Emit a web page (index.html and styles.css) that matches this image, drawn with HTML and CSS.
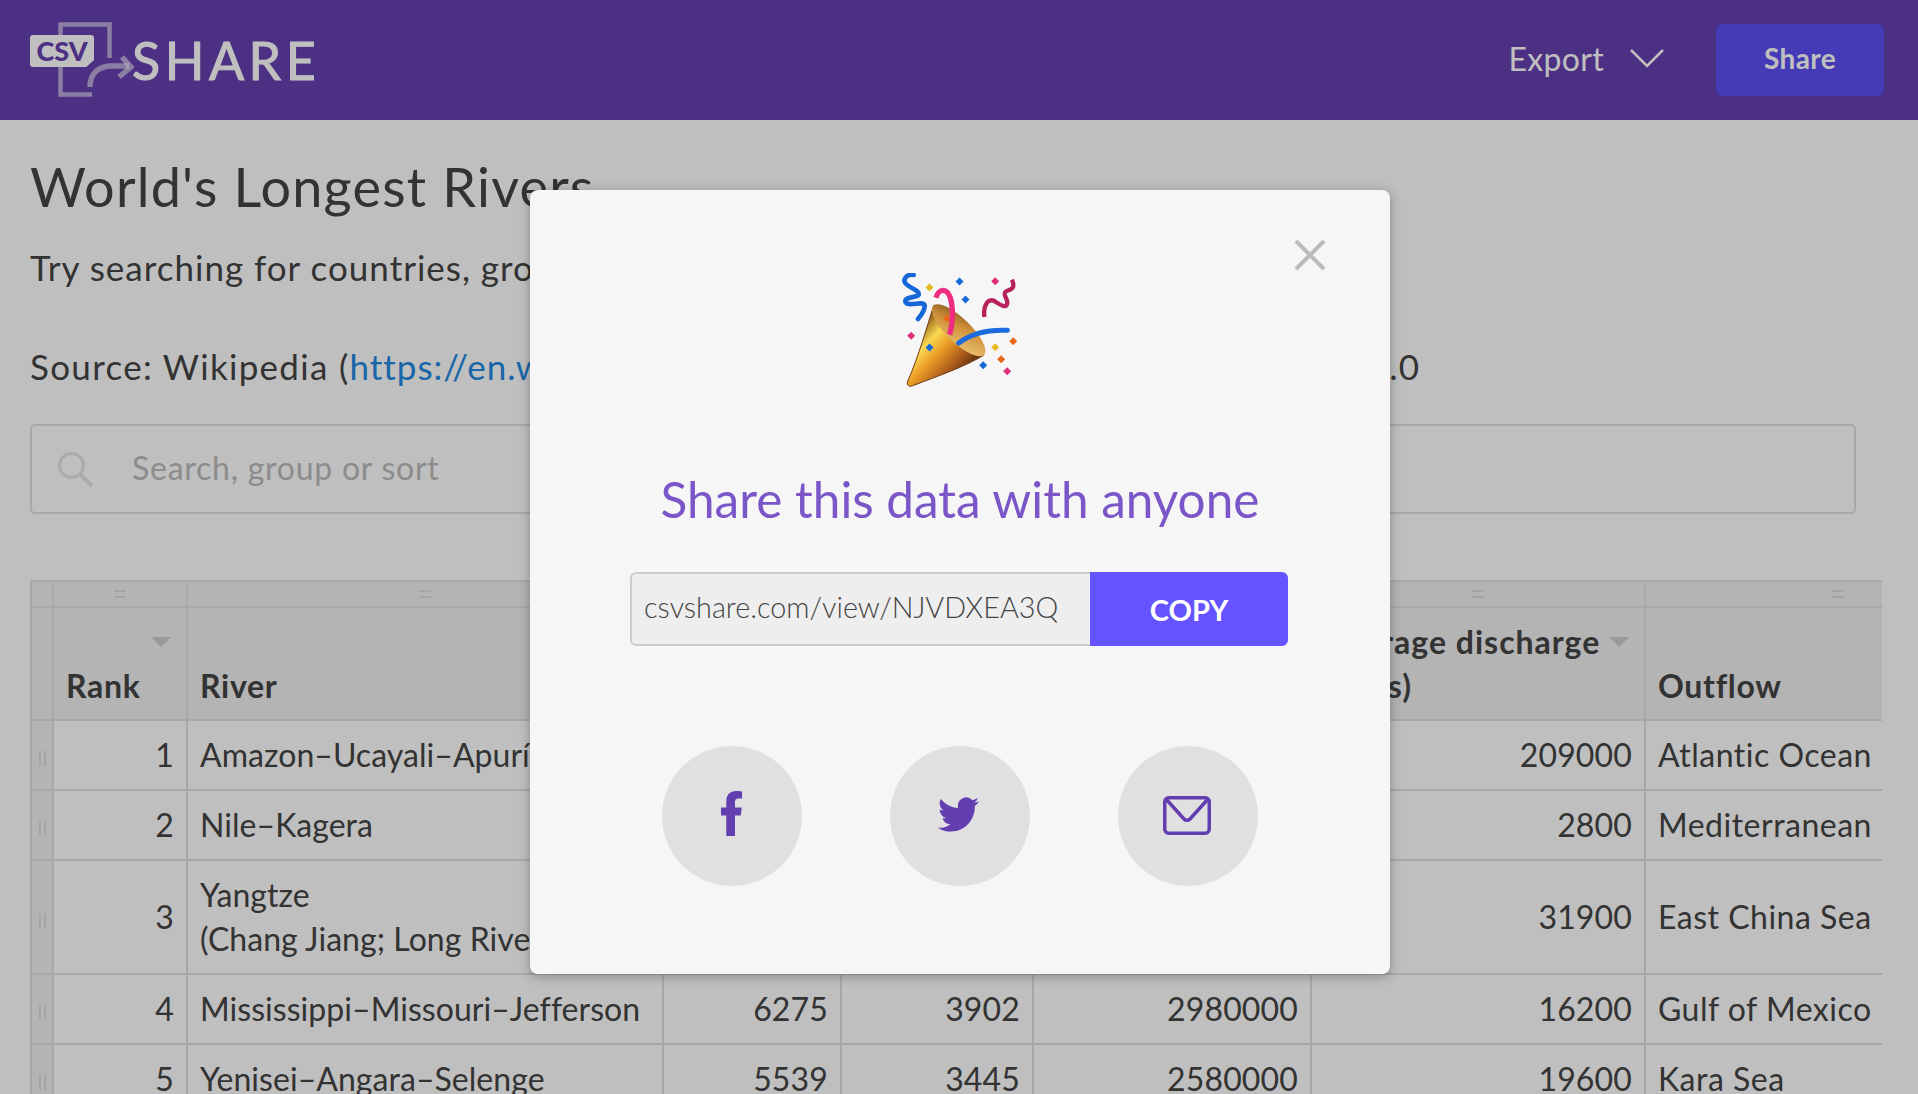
FILE: index.html
```html
<!DOCTYPE html>
<html lang="en">

<head>
  <meta charset="UTF-8">
  <meta name="viewport" content="width=device-width, initial-scale=1.0">
  <title>World's Longest Rivers - CSV Share</title>
  <link rel="stylesheet" href="styles.css">
</head>

<body>
  <header class="topbar">
    <a href="#" class="logo">
      <span class="logo-mark">
        <svg class="logo-art" width="104" height="78" viewBox="0 0 104 78">
          <path d="M30.500 47V3.500H79.500V37M62 73.500H30.500V47" fill="none" stroke="#fff" stroke-opacity="0.55" stroke-width="4.500" />
          <path d="M60 66C60 52 69 45 82 45H99" fill="none" stroke="#fff" stroke-opacity="0.55" stroke-width="5.500" />
          <path d="M92 36L101 46L89 56" fill="none" stroke="#fff" stroke-opacity="0.55" stroke-width="5.500" />
        </svg>
        <span class="logo-csv">CSV</span>
      </span>
      <span class="logo-text">SHARE</span>
    </a>
    <div class="topbar-actions">
      <a href="#" class="export">
        Export
        <svg width="34" height="20" viewBox="0 0 34 20">
          <path d="M1 2L17 18L33 2" fill="none" stroke="#fff" stroke-width="2.500" />
        </svg>
      </a>
      <button class="share-button">Share</button>
    </div>
  </header>

  <main class="content">
    <h1>World's Longest Rivers</h1>
    <p class="intro">Try searching for countries, group by continent, or sort by length</p>
    <p class="source">Source: Wikipedia (<a href="#">https://en.wikipedia.org/wiki/List_of_rivers_by_length</a>), CC BY 3.0</p>

    <div class="search">
      <svg width="36" height="36" viewBox="0 0 36 36">
        <circle cx="13.500" cy="13.500" r="12" fill="none" stroke="#e4e4e4" stroke-width="3" />
        <path d="M22 22L34 34" fill="none" stroke="#e4e4e4" stroke-width="4" />
      </svg>
      <span>Search, group or sort</span>
    </div>

    <div class="table-wrap">
      <table class="rivers">
        <colgroup>
          <col class="col-handle">
          <col class="col-rank">
          <col class="col-river">
          <col class="col-km">
          <col class="col-miles">
          <col class="col-area">
          <col class="col-discharge">
          <col class="col-outflow">
        </colgroup>
        <thead>
          <tr class="column-handles">
            <th></th>
            <th><span class="grip-h"></span></th>
            <th><span class="grip-h"></span></th>
            <th><span class="grip-h"></span></th>
            <th><span class="grip-h"></span></th>
            <th><span class="grip-h"></span></th>
            <th><span class="grip-h"></span></th>
            <th><span class="grip-h"></span></th>
          </tr>
          <tr class="column-names">
            <th class="row-handle"></th>
            <th class="sorted">Rank</th>
            <th>River</th>
            <th class="sorted">Length (km)</th>
            <th class="sorted">Length (miles)</th>
            <th class="sorted">Drainage area (km²)</th>
            <th class="sorted">Average discharge (m³/s)</th>
            <th>Outflow</th>
          </tr>
        </thead>
        <tbody>
          <tr>
            <td class="row-handle"><span class="grip-v"></span></td>
            <td class="num">1</td>
            <td class="river">Amazon–Ucayali–Apurímac</td>
            <td class="num">6992</td>
            <td class="num">4345</td>
            <td class="num">7050000</td>
            <td class="num">209000</td>
            <td class="outflow">Atlantic Ocean</td>
          </tr>
          <tr>
            <td class="row-handle"><span class="grip-v"></span></td>
            <td class="num">2</td>
            <td class="river">Nile–Kagera</td>
            <td class="num">6853</td>
            <td class="num">4258</td>
            <td class="num">3254555</td>
            <td class="num">2800</td>
            <td class="outflow">Mediterranean</td>
          </tr>
          <tr>
            <td class="row-handle"><span class="grip-v"></span></td>
            <td class="num">3</td>
            <td class="river">Yangtze<br>(Chang Jiang; Long River)</td>
            <td class="num">6300</td>
            <td class="num">3917</td>
            <td class="num">1800000</td>
            <td class="num">31900</td>
            <td class="outflow">East China Sea</td>
          </tr>
          <tr>
            <td class="row-handle"><span class="grip-v"></span></td>
            <td class="num">4</td>
            <td class="river">Mississippi–Missouri–Jefferson</td>
            <td class="num">6275</td>
            <td class="num">3902</td>
            <td class="num">2980000</td>
            <td class="num">16200</td>
            <td class="outflow">Gulf of Mexico</td>
          </tr>
          <tr>
            <td class="row-handle"><span class="grip-v"></span></td>
            <td class="num">5</td>
            <td class="river">Yenisei–Angara–Selenge</td>
            <td class="num">5539</td>
            <td class="num">3445</td>
            <td class="num">2580000</td>
            <td class="num">19600</td>
            <td class="outflow">Kara Sea</td>
          </tr>
        </tbody>
      </table>
    </div>
  </main>

  <div class="overlay">
    <div class="modal">
      <button class="modal-close" aria-label="Close">
        <svg width="32" height="32" viewBox="0 0 32 32">
          <path d="M2 2L30 30M30 2L2 30" fill="none" stroke="#bbb" stroke-width="4" />
        </svg>
      </button>

      <svg class="party" width="117" height="114" viewBox="120 100 351 342">
        <defs>
          <linearGradient id="coneOuter" gradientUnits="userSpaceOnUse" x1="150" y1="270" x2="300" y2="410">
            <stop offset="0" stop-color="#7e4712" />
            <stop offset="0.3" stop-color="#f9d850" />
            <stop offset="0.5" stop-color="#eda028" />
            <stop offset="0.8" stop-color="#a9581a" />
            <stop offset="1" stop-color="#5e2f0c" />
          </linearGradient>
          <linearGradient id="coneInner" x1="0" y1="0" x2="1" y2="1">
            <stop offset="0" stop-color="#7d4e1e" />
            <stop offset="0.4" stop-color="#cf9038" />
            <stop offset="1" stop-color="#f0cb7c" />
          </linearGradient>
        </defs>
        <path d="M155 106C135 102 122 118 130 130C140 145 172 150 170 165C165 175 130 170 130 185C135 205 185 180 188 198C188 215 178 225 168 238" fill="none" stroke="#1668d8" stroke-width="14" stroke-linecap="round" stroke-linejoin="round" />
        <path d="M367 232C364 205 372 180 392 182C410 190 432 212 436 190C436 172 420 165 432 155C445 148 462 150 450 120" fill="none" stroke="#b8225a" stroke-width="13" />
        <path d="M215 198C195 260 170 350 137 425C132 440 145 442 155 437C225 410 300 385 365 347C350 300 270 210 215 198Z" fill="url(#coneOuter)" stroke="#6b3a10" stroke-width="3" />
        <ellipse cx="290" cy="272" rx="106" ry="36" transform="rotate(44 290 272)" fill="url(#coneInner)" />
        <rect x="247" y="227" width="17" height="17" transform="rotate(45 255.500 235.500)" fill="#e8661a" />
        <path d="M222 174C230 146 258 140 268 185C275 225 270 260 263 285" fill="none" stroke="#ee2c80" stroke-width="16" />
        <path d="M290 310C330 280 380 270 436 272" fill="none" stroke="#1c6ce0" stroke-width="15" stroke-linecap="round" />
        <rect x="194" y="315" width="17" height="17" transform="rotate(45 202.500 323.500)" fill="#1668d8" />
        <rect x="139" y="280" width="17" height="17" transform="rotate(45 147.500 288.500)" fill="#e0307c" />
        <rect x="194" y="135" width="17" height="17" transform="rotate(45 202.500 143.500)" fill="#e6bb22" />
        <rect x="284" y="117" width="17" height="17" transform="rotate(45 292.500 125.500)" fill="#1668d8" />
        <rect x="302" y="171" width="17" height="17" transform="rotate(45 310.500 179.500)" fill="#1668d8" />
        <rect x="391" y="116" width="17" height="17" transform="rotate(45 399.500 124.500)" fill="#e0307c" />
        <rect x="391" y="314" width="17" height="17" transform="rotate(45 399.500 322.500)" fill="#e6bb22" />
        <rect x="445" y="296" width="17" height="17" transform="rotate(45 453.500 304.500)" fill="#e8661a" />
        <rect x="409" y="350" width="17" height="17" transform="rotate(45 417.500 358.500)" fill="#e8661a" />
        <rect x="355" y="368" width="17" height="17" transform="rotate(45 363.500 376.500)" fill="#1668d8" />
        <rect x="427" y="386" width="17" height="17" transform="rotate(45 435.500 394.500)" fill="#e0307c" />
      </svg>

      <h2>Share this data with anyone</h2>

      <div class="copy-row">
        <div class="copy-url">csvshare.com/view/NJVDXEA3Q</div>
        <button class="copy-button">COPY</button>
      </div>

      <div class="social">
        <a href="#" class="social-item">
          <svg class="facebook" width="21" height="45" viewBox="0 0 21 45">
            <path d="M14 45V24.500H19.800L20.700 16.500H14V11.500C14 9.200 14.600 7.600 17.900 7.600H21V.4C20.300.3 18 0 15.200 0C9.300 0 5.300 3.600 5.300 10.100V16.500H0V24.500H5.300V45Z" />
          </svg>
        </a>
        <a href="#" class="social-item">
          <svg class="twitter" width="41" height="35" viewBox="0 2 24 20" preserveAspectRatio="none">
            <path d="M23.953 4.57a10 10 0 01-2.825.775 4.958 4.958 0 002.163-2.723c-.951.555-2.005.959-3.127 1.184a4.92 4.92 0 00-8.384 4.482C7.69 8.095 4.067 6.13 1.64 3.162a4.822 4.822 0 00-.666 2.475c0 1.71.87 3.213 2.188 4.096a4.904 4.904 0 01-2.228-.616v.06a4.923 4.923 0 003.946 4.827 4.996 4.996 0 01-2.212.085 4.936 4.936 0 004.604 3.417 9.867 9.867 0 01-6.102 2.105c-.39 0-.779-.023-1.17-.067a13.995 13.995 0 007.557 2.209c9.053 0 13.998-7.496 13.998-13.985 0-.21 0-.42-.015-.63A9.935 9.935 0 0024 4.59z" />
          </svg>
        </a>
        <a href="#" class="social-item">
          <svg class="mail" width="48" height="39" viewBox="0 0 48 39">
            <rect x="1.750" y="1.750" width="44.500" height="35.500" rx="4" />
            <path d="M3 3L21 23C22.700 24.800 25.300 24.800 27 23L45 3" />
          </svg>
        </a>
      </div>
    </div>
  </div>
</body>

</html>
```

FILE: styles.css
```css
* {
  margin: 0;
  padding: 0;
  box-sizing: border-box;
}

html,
body {
  height: 100%;
  overflow: hidden;
}

body {
  font-family: 'Lato', 'Liberation Sans', sans-serif;
  background: #fff;
  color: #444;
  position: relative;
}

a {
  text-decoration: none;
}

button {
  border: none;
  font-family: inherit;
  cursor: pointer;
}

/* top bar */
.topbar {
  height: 120px;
  background: #6640b1;
  display: flex;
  justify-content: space-between;
  align-items: center;
  padding: 0 34px 0 30px;
}

.logo {
  display: flex;
  align-items: center;
  color: #fff;
}

.logo-mark {
  position: relative;
  width: 102px;
  height: 78px;
}

.logo-art {
  position: absolute;
  left: 0;
  top: 0;
}

.logo-csv {
  position: absolute;
  left: 0;
  top: 14px;
  width: 64px;
  height: 32px;
  background: #fff;
  border-radius: 3px;
  clip-path: polygon(0 0, 100% 0, 100% 78%, 88% 100%, 0 100%);
  color: #6640b1;
  font-size: 27px;
  font-weight: 900;
  line-height: 32px;
  text-align: center;
}

.logo-text {
  font-size: 52px;
  line-height: 60px;
  letter-spacing: 4.5px;
  -webkit-text-stroke: 1px #fff;
}

.topbar-actions {
  display: flex;
  align-items: center;
}

.export {
  display: flex;
  align-items: center;
  gap: 26px;
  color: #fff;
  font-size: 32px;
  letter-spacing: 0.3px;
  margin: -4px 52px 0 0;
}

.share-button {
  width: 168px;
  height: 72px;
  background: #5c4ff5;
  border-radius: 6px;
  color: #fff;
  font-size: 28px;
  font-weight: 700;
  letter-spacing: 0.4px;
  padding-bottom: 4px;
}

/* page */
.content {
  padding: 34px 36px 0 30px;
}

h1 {
  font-size: 54px;
  font-weight: 400;
  line-height: 66px;
  letter-spacing: 1.2px;
  margin-bottom: 25px;
}

.intro,
.source {
  font-size: 35px;
  line-height: 44px;
  letter-spacing: 1px;
}

.source {
  margin-top: 55px;
  letter-spacing: 1.3px;
}

.source a {
  color: #2288e0;
  letter-spacing: 0.95px;
}

.search {
  display: flex;
  align-items: center;
  gap: 38px;
  height: 90px;
  margin: 36px 26px 66px 0;
  padding: 0 0 4px 26px;
  border: 2px solid #e0e0e0;
  border-radius: 5px;
  color: #bbb;
  font-size: 32px;
  letter-spacing: 0.75px;
}

.search svg {
  margin-top: 6px;
}

/* table */
.table-wrap {
  overflow: hidden;
}

.rivers {
  border-collapse: separate;
  border-spacing: 0;
  table-layout: fixed;
  width: 2000px;
  font-size: 32px;
  line-height: 44px;
  letter-spacing: 0.15px;
}

.col-handle { width: 22px; }
.col-rank { width: 134px; }
.col-river { width: 476px; }
.col-km { width: 178px; }
.col-miles { width: 192px; }
.col-area { width: 278px; }
.col-discharge { width: 334px; }
.col-outflow { width: 386px; }

.rivers th,
.rivers td {
  border-top: 2px solid #e0e0e0;
  border-left: 2px solid #e0e0e0;
  padding: 12px;
  text-align: left;
  white-space: nowrap;
  overflow: hidden;
}

.rivers thead th {
  background: #f1f1f1;
  position: relative;
}

.column-handles th {
  height: 26px;
  padding: 0;
  text-align: center;
  vertical-align: middle;
}

.column-names th {
  height: 113px;
  font-weight: 700;
  vertical-align: bottom;
  padding-bottom: 11px;
  white-space: normal;
  line-height: 44px;
  letter-spacing: 0.7px;
}

.column-names th:nth-child(7) {
  letter-spacing: 1px;
}

.rivers .num {
  text-align: right;
}

.rivers .river {
  letter-spacing: 0.05px;
}

.rivers .outflow {
  letter-spacing: 0.5px;
}

.rivers .row-handle {
  background: #f1f1f1;
  padding: 0;
  text-align: center;
  vertical-align: middle;
}

.sorted::after {
  content: '';
  position: absolute;
  top: 29px;
  right: 15px;
  border-top: 10px solid #ccc;
  border-left: 10px solid transparent;
  border-right: 10px solid transparent;
}

.grip-h {
  display: block;
  width: 12px;
  height: 8px;
  margin: 0 auto;
  border-top: 2px solid #dcdcdc;
  border-bottom: 2px solid #dcdcdc;
}

.grip-v {
  display: inline-block;
  width: 7px;
  height: 15px;
  vertical-align: middle;
  border-left: 2px solid #dcdcdc;
  border-right: 2px solid #dcdcdc;
}

/* share modal */
.overlay {
  position: absolute;
  inset: 0;
  background: rgba(0, 0, 0, 0.25);
  display: flex;
  justify-content: center;
  align-items: flex-start;
  padding: 190px 0 0 2px;
}

.modal {
  position: relative;
  width: 860px;
  height: 784px;
  background: #f6f6f6;
  border-radius: 8px;
  box-shadow: 0 2px 12px rgba(0, 0, 0, 0.3);
  padding-top: 83px;
  display: flex;
  flex-direction: column;
  align-items: center;
}

.modal-close {
  position: absolute;
  top: 49px;
  right: 64px;
  width: 32px;
  height: 32px;
  background: none;
}

.party {
  display: block;
}

.modal h2 {
  margin-top: 82px;
  color: #7a56c8;
  font-size: 49.5px;
  font-weight: 400;
  line-height: 60px;
  text-align: center;
}

.copy-row {
  display: flex;
  margin: 43px 2px 0 0;
  height: 74px;
}

.copy-url {
  width: 460px;
  background: #eee;
  border: 2px solid #ccc;
  border-right: none;
  border-radius: 6px 0 0 6px;
  padding-left: 12px;
  color: #444;
  font-size: 28.8px;
  font-weight: 300;
  line-height: 66px;
}

.copy-button {
  width: 198px;
  background: #6553ff;
  border-radius: 0 6px 6px 0;
  color: #fff;
  font-size: 29px;
  font-weight: 700;
}

.social {
  display: flex;
  gap: 88px;
  margin-top: 100px;
}

.social-item {
  width: 140px;
  height: 140px;
  border-radius: 50%;
  background: #e0e0e0;
  display: flex;
  align-items: center;
  justify-content: center;
  fill: #633eb0;
}

.facebook {
  margin: -6px 0 0 -2px;
}

.twitter {
  margin: -3px 0 0 -3px;
}

.mail {
  margin: -1px 0 0 -2px;
  fill: none;
  stroke: #633eb0;
  stroke-width: 3.5;
}
```
